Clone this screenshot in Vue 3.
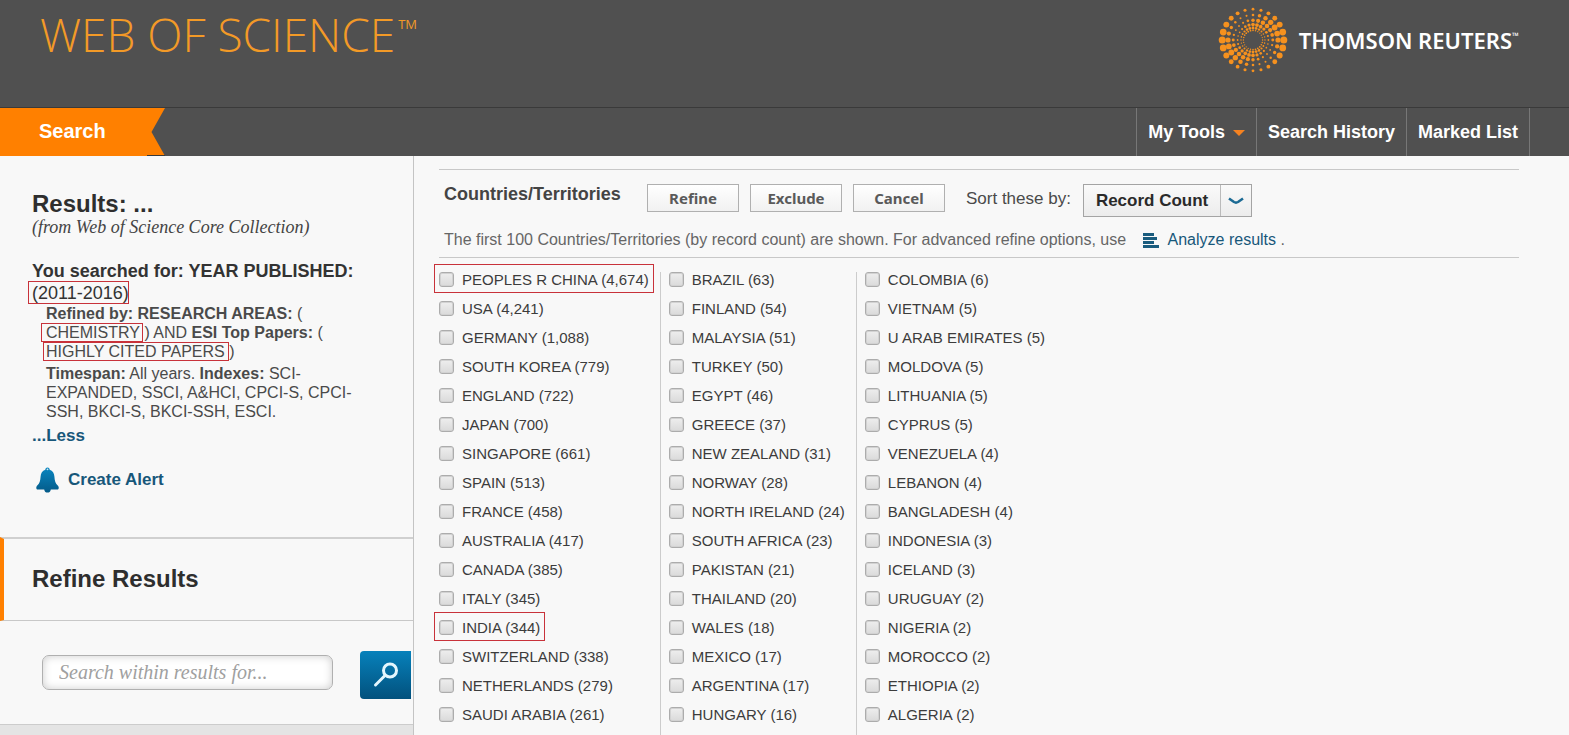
<script setup>
import { ref } from 'vue'

const query = ref('')
const sortBy = ref('Record Count')

const columns = [
  [
    ['PEOPLES R CHINA', '4,674', true],
    ['USA', '4,241'],
    ['GERMANY', '1,088'],
    ['SOUTH KOREA', '779'],
    ['ENGLAND', '722'],
    ['JAPAN', '700'],
    ['SINGAPORE', '661'],
    ['SPAIN', '513'],
    ['FRANCE', '458'],
    ['AUSTRALIA', '417'],
    ['CANADA', '385'],
    ['ITALY', '345'],
    ['INDIA', '344', true],
    ['SWITZERLAND', '338'],
    ['NETHERLANDS', '279'],
    ['SAUDI ARABIA', '261'],
  ],
  [
    ['BRAZIL', '63'],
    ['FINLAND', '54'],
    ['MALAYSIA', '51'],
    ['TURKEY', '50'],
    ['EGYPT', '46'],
    ['GREECE', '37'],
    ['NEW ZEALAND', '31'],
    ['NORWAY', '28'],
    ['NORTH IRELAND', '24'],
    ['SOUTH AFRICA', '23'],
    ['PAKISTAN', '21'],
    ['THAILAND', '20'],
    ['WALES', '18'],
    ['MEXICO', '17'],
    ['ARGENTINA', '17'],
    ['HUNGARY', '16'],
  ],
  [
    ['COLOMBIA', '6'],
    ['VIETNAM', '5'],
    ['U ARAB EMIRATES', '5'],
    ['MOLDOVA', '5'],
    ['LITHUANIA', '5'],
    ['CYPRUS', '5'],
    ['VENEZUELA', '4'],
    ['LEBANON', '4'],
    ['BANGLADESH', '4'],
    ['INDONESIA', '3'],
    ['ICELAND', '3'],
    ['URUGUAY', '2'],
    ['NIGERIA', '2'],
    ['MOROCCO', '2'],
    ['ETHIOPIA', '2'],
    ['ALGERIA', '2'],
  ],
]

// Concentric rings of dots; the largest dots turn a little with each ring.
const rings = [
  { r: 30.8, min: 1.4, max: 3.5, turn: 0 },
  { r: 25, min: 1, max: 2.9, turn: -24 },
  { r: 19.8, min: 0.9, max: 2.3, turn: -50 },
  { r: 15.4, min: 0.8, max: 1.9, turn: -74 },
  { r: 12, min: 0.7, max: 1.4, turn: -95 },
  { r: 9.6, min: 0.6, max: 0.9, turn: -120 },
]
const dots = rings.flatMap((ring) =>
  Array.from({ length: 24 }, (_, i) => {
    const a = (i * 15 * Math.PI) / 180
    const w = Math.cos(a - (ring.turn * Math.PI) / 180) ** 2
    return {
      x: (35 + ring.r * Math.cos(a)).toFixed(2),
      y: (35 + ring.r * Math.sin(a)).toFixed(2),
      r: (ring.min + (ring.max - ring.min) * w).toFixed(2),
    }
  }),
)
</script>

<template>
  <div class="page">
    <header class="masthead">
      <a class="product" href="#">WEB OF SCIENCE<span class="tm">TM</span></a>
      <a class="company" href="#">
        <svg class="sphere" viewBox="0 0 70 70" aria-hidden="true">
          <circle v-for="(d, i) in dots" :key="i" :cx="d.x" :cy="d.y" :r="d.r" fill="#f6911e" />
        </svg>
        <span>THOMSON REUTERS<span class="mark">™</span></span>
      </a>
    </header>

    <nav class="bar">
      <a class="tab" href="#">
        <svg class="flag" viewBox="0 0 165 48" preserveAspectRatio="none" aria-hidden="true">
          <path d="M0 0H165L151.500 24L165 48H0Z" fill="#ff8000" />
          <path d="M147 47H165V48H147Z" fill="#3a3a3a" />
        </svg>
        <span class="tab-text">Search</span>
      </a>
      <div class="links">
        <a href="#">My Tools<svg class="tri" viewBox="0 0 12 6" aria-hidden="true"><path d="M0 0H12L6 6Z" fill="#f58220" /></svg></a>
        <a href="#">Search History</a>
        <a href="#">Marked List</a>
      </div>
    </nav>

    <div class="body">
      <aside class="side">
        <section class="summary">
          <h1>Results: ...</h1>
          <p class="source">(from Web of Science Core Collection)</p>
          <p class="searched"><b>You searched for: YEAR PUBLISHED:</b> <span class="hit years">(2011-2016)</span></p>
          <p class="detail">
            <b>Refined by: RESEARCH AREAS:</b> ( <span class="hit area">CHEMISTRY</span> ) AND
            <b>ESI Top Papers:</b> ( <span class="hit papers">HIGHLY CITED PAPERS</span> )
          </p>
          <p class="detail span">
            <b>Timespan:</b> All years. <b>Indexes:</b> SCI-EXPANDED, SSCI, A&amp;HCI, CPCI-S, CPCI-SSH, BKCI-S, BKCI-SSH, ESCI.
          </p>
          <a class="less" href="#">...Less</a>
          <a class="alert" href="#">
            <svg class="bell" viewBox="0 0 23 26" aria-hidden="true">
              <defs>
                <linearGradient id="bell-fill" x1="0" y1="0" x2="0" y2="1">
                  <stop offset="0" stop-color="#0a86c0" />
                  <stop offset="1" stop-color="#045a88" />
                </linearGradient>
              </defs>
              <path
                fill="url(#bell-fill)"
                d="M11.500 0.500C10 0.500 9.300 1.500 9.300 2.800C6.300 3.900 4.800 6.400 4.600 9.500C4.300 14 3.600 16.500 1 18.800C0 20 0 21.800 1 22.500H8.200C8.600 24.800 9.800 25.600 11.500 25.600S14.400 24.800 14.800 22.500H22C23 21.800 23 20 22 18.800C19.400 16.500 18.700 14 18.400 9.500C18.200 6.400 16.700 3.900 13.700 2.800C13.700 1.500 13 0.500 11.500 0.500Z"
              />
              <circle cx="11.500" cy="2.300" r="0.900" fill="#cfe6f2" />
            </svg>
            Create Alert
          </a>
        </section>

        <h2 class="refine-title">Refine Results</h2>

        <form class="finder" @submit.prevent>
          <input v-model="query" type="text" aria-label="Search within results" placeholder="Search within results for..." />
          <button type="submit" aria-label="Search">
            <svg viewBox="0 0 26 26" aria-hidden="true" fill="none" stroke="#e4f6fd" stroke-linecap="round">
              <circle cx="17" cy="8.500" r="6.500" stroke-width="3" />
              <path d="M12 13.500L2.500 23" stroke-width="3" />
            </svg>
          </button>
        </form>
        <div class="rest"></div>
      </aside>

      <main class="panel">
        <div class="tools">
          <h2>Countries/Territories</h2>
          <div class="actions">
            <button type="button">Refine</button>
            <button type="button">Exclude</button>
            <button type="button">Cancel</button>
          </div>
          <label class="sort-label" for="sort">Sort these by:</label>
          <div class="sort">
            <select id="sort" v-model="sortBy">
              <option>Record Count</option>
            </select>
            <span class="caret">
              <svg viewBox="0 0 16 8" aria-hidden="true"><path d="M1 1.500L6 5Q8 6.200 10 5L15 1.500" fill="none" stroke="#1b6a94" stroke-width="2.600" /></svg>
            </span>
          </div>
        </div>
        <p class="note">
          The first 100 Countries/Territories (by record count) are shown. For advanced refine options, use
          <a href="#"><svg class="bars" viewBox="0 0 16 15" aria-hidden="true"><path d="M0 0H11V3H0ZM0 4H14V7H0ZM0 8H11V11H0ZM0 12H16V15H0Z" fill="#1a5c7e" /></svg>Analyze results</a> .
        </p>
        <div class="countries">
          <ul v-for="(col, c) in columns" :key="c">
            <li v-for="[name, count, marked] in col" :key="name">
              <label :class="{ marked }"><input type="checkbox" />{{ name }} ({{ count }})</label>
            </li>
          </ul>
        </div>
      </main>
    </div>
  </div>
</template>

<style>
html,
body {
  margin: 0;
  background: #f8f8f8;
}
</style>

<style scoped>
.page {
  display: flex;
  flex-direction: column;
  min-height: 100vh;
  font-family: "Liberation Sans", Arial, sans-serif;
  color: #333;
}
.page * {
  box-sizing: border-box;
}
h1,
h2,
p,
ul {
  margin: 0;
  padding: 0;
}
a {
  text-decoration: none;
  color: #17577a;
}

.masthead {
  display: flex;
  justify-content: space-between;
  align-items: flex-start;
  height: 108px;
  padding: 5px 50px 0 40px;
  background: #505050;
  border-bottom: 1px solid #3a3a3a;
}
.product {
  display: flex;
  align-items: flex-start;
  gap: 3px;
  font: 300 46px/58px "Open Sans", sans-serif;
  color: #f39a27;
}
.tm {
  font-size: 13px;
  font-weight: 400;
  line-height: 38px;
}
.company {
  display: flex;
  align-items: center;
  gap: 11px;
  font: 600 22px/24px "Noto Sans", sans-serif;
  color: #fff;
}
.mark {
  font-size: 9px;
  vertical-align: top;
  line-height: 16px;
}
.sphere {
  width: 70px;
  height: 70px;
}

.bar {
  display: flex;
  justify-content: space-between;
  height: 48px;
  padding-right: 39px;
  background: #505050;
}
.tab {
  position: relative;
  width: 165px;
  padding-left: 39px;
  font-size: 20px;
  font-weight: bold;
  line-height: 46px;
  color: #fff;
}
.flag {
  position: absolute;
  inset: 0;
  width: 100%;
  height: 100%;
}
.tab-text {
  position: relative;
}
.links {
  display: flex;
  border-right: 1px solid #777;
}
.links a {
  padding: 0 11px;
  border-left: 1px solid #777;
  font-size: 18px;
  font-weight: bold;
  line-height: 48px;
  color: #fff;
}
.tri {
  width: 12px;
  height: 6px;
  margin-left: 8px;
  vertical-align: 2px;
}

.body {
  display: flex;
  flex: 1;
}
.side {
  display: flex;
  flex-direction: column;
  flex: 0 0 414px;
  border-right: 1px solid #c4c4c4;
}
.summary {
  display: flex;
  flex-direction: column;
  align-items: flex-start;
  padding: 34px 50px 44px 32px;
}
h1,
.refine-title {
  font-size: 24px;
  line-height: 28px;
  color: #2e2e2e;
}
.source {
  font: italic 18px/18px "Liberation Serif", Georgia, serif;
  color: #444;
}
.searched {
  margin-top: 24px;
  font-size: 18px;
  line-height: 22px;
}
.detail {
  padding-left: 14px;
  font-size: 16px;
  line-height: 19px;
  color: #4a4a4a;
}
.span {
  margin-top: 3px;
}
.hit {
  position: relative;
  white-space: nowrap;
}
.hit::after {
  content: "";
  position: absolute;
  inset: -1px -3px -1px -5px;
  border: 1px solid #c8323a;
}
.years::after {
  inset: -2px 0 -1px -4px;
}
.papers::after {
  inset: -1px -4px -1px -3px;
}
.less {
  margin-top: 4px;
  font-size: 17px;
  font-weight: bold;
  line-height: 22px;
}
.alert {
  display: flex;
  align-items: center;
  gap: 9px;
  margin: 20px 0 0 4px;
  font-size: 17px;
  font-weight: bold;
  line-height: 26px;
}
.bell {
  width: 23px;
  height: 26px;
}
.refine-title {
  padding: 26px 28px 27px;
  border-top: 2px solid #d0d0d0;
  border-bottom: 1px solid #c8c8c8;
  border-left: 4px solid #ff8000;
}
.finder {
  display: flex;
  align-items: flex-start;
  justify-content: space-between;
  padding: 30px 2px 25px 42px;
}
.finder input {
  width: 291px;
  height: 35px;
  margin: 4px 0 0;
  padding: 0 16px;
  border: 1px solid #b0b0b0;
  border-radius: 7px;
  background: #fff;
  box-shadow: inset 0 0 8px #ccc;
  font: italic 20px "Liberation Serif", Georgia, serif;
  color: #333;
}
.finder input::placeholder {
  color: #a0a0a0;
}
.finder button {
  display: flex;
  align-items: center;
  justify-content: center;
  width: 51px;
  height: 48px;
  padding: 0;
  border: 0;
  border-radius: 4px 0 0 4px;
  background: linear-gradient(#0781bb, #02517d);
}
.finder svg {
  width: 26px;
  height: 26px;
}
.rest {
  flex: 1;
  border-top: 1px solid #ccc;
  background: #e4e4e4;
}

.panel {
  display: flex;
  flex-direction: column;
  flex: 1;
  margin: 13px 50px 0 25px;
  border-top: 1px solid #c8c8c8;
}
.tools {
  display: flex;
  align-items: flex-start;
  padding: 14px 0 0 5px;
}
.tools h2 {
  width: 203px;
  font-size: 18px;
  line-height: 20px;
  color: #444;
}
.actions {
  display: flex;
  gap: 11px;
}
.actions button {
  width: 92px;
  height: 28px;
  padding: 0;
  border: 1px solid #b0b0b0;
  background: linear-gradient(#fff, #f1f1f1);
  font: bold 15px "Noto Sans", sans-serif;
  color: #5a5a5a;
}
.sort-label {
  margin: 0 12px 0 21px;
  font-size: 17px;
  line-height: 30px;
  color: #4a4a4a;
}
.sort {
  position: relative;
  width: 169px;
}
.sort select {
  width: 100%;
  height: 33px;
  padding: 0 0 0 12px;
  appearance: none;
  border: 1px solid #a4a4a4;
  border-radius: 0;
  background: linear-gradient(#fafafa, #ececec);
  font: bold 17px "Liberation Sans", Arial, sans-serif;
  color: #2a2a2a;
}
.caret {
  position: absolute;
  inset: 1px 1px 1px auto;
  display: flex;
  align-items: center;
  justify-content: center;
  width: 31px;
  border-left: 1px solid #bbb;
  pointer-events: none;
}
.caret svg {
  width: 16px;
  height: 8px;
}
.note {
  padding: 12px 0 7px 5px;
  border-bottom: 1px solid #c8c8c8;
  font-size: 16px;
  line-height: 21px;
  color: #666;
}
.bars {
  width: 16px;
  height: 15px;
  margin: 0 9px 0 12px;
  vertical-align: -3px;
}
.countries {
  display: flex;
  flex: 1;
  margin-top: 14px;
}
.countries ul {
  list-style: none;
  padding: 0 11px 0 8px;
  border-left: 1px solid #ccc;
}
.countries ul:first-child {
  padding-left: 0;
  border-left: 0;
}
.countries li {
  display: flex;
  align-items: flex-start;
  height: 29px;
  font-size: 15px;
  line-height: 15px;
  color: #3c3c3c;
}
.countries label {
  position: relative;
  display: flex;
  align-items: center;
  gap: 8px;
  white-space: nowrap;
}
.countries input {
  width: 15px;
  height: 15px;
  margin: 0;
  appearance: none;
  border: 1px solid #acacac;
  border-radius: 3px;
  background: linear-gradient(#eee, #dadada);
  box-shadow: inset 0 0 0 1px #d2d2d2;
}
.marked::after {
  content: "";
  position: absolute;
  inset: -8px -5px -6px -5px;
  border: 1px solid #c8323a;
}
</style>
